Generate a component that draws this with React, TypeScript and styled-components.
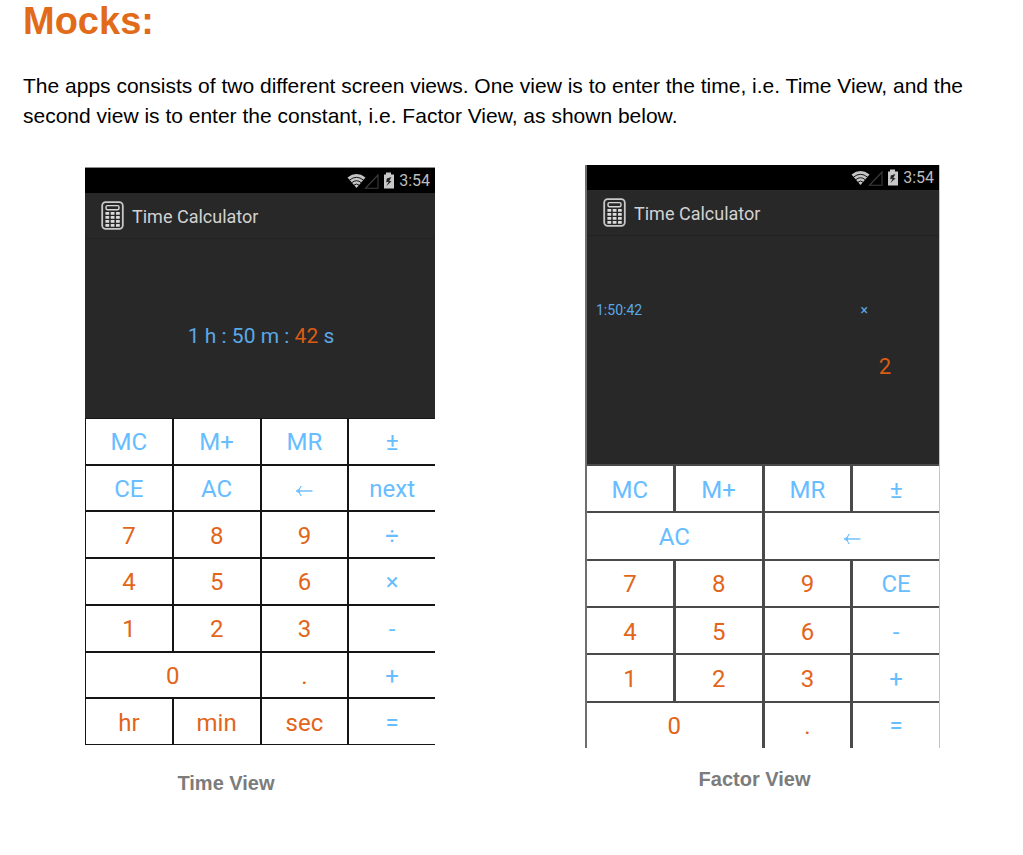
import React from "react";
import styled, { createGlobalStyle } from "styled-components";

const GlobalStyle = createGlobalStyle`
  * { box-sizing: border-box; }
  body {
    margin: 0;
    background: #fff;
    color: #000;
    font-family: "Liberation Sans", Arial, sans-serif;
  }
`;

const BLUE = "#67bdff";
const ORANGE = "#e2651a";

const Page = styled.main`
  padding: 0 23px 40px;
`;

const Title = styled.h1`
  margin: 0;
  font-size: 38px;
  line-height: 42px;
  color: #e26b1a;
`;

const Intro = styled.p`
  margin: 29px 0 34px;
  font-size: 21px;
  line-height: 30px;
`;

const Mocks = styled.div`
  display: grid;
  grid-template-columns: 350fr 355fr;
  gap: 150px;
  align-items: start;
  padding: 0 60px 0 62px;
`;

const Figure = styled.figure<{ $top: number }>`
  margin: ${(p) => p.$top}px 0 0;
`;

const Caption = styled.figcaption<{ $shift: number; $gap: number }>`
  padding: ${(p) => p.$gap}px ${(p) => p.$shift}px 0 0;
  font-size: 20px;
  font-weight: bold;
  line-height: 24px;
  text-align: center;
  color: #7c7c7c;
`;

const Phone = styled.section<{ $framed?: boolean }>`
  font-family: Roboto, sans-serif;
  background: #282828;
  border-style: solid;
  border-color: ${(p) => (p.$framed ? "transparent #c4c4c4 transparent #6e6e6e" : "#8e8e8e transparent transparent")};
  border-width: ${(p) => (p.$framed ? "0 1px 0 2px" : "1px 0 0")};
`;

const StatusBar = styled.div`
  display: flex;
  justify-content: flex-end;
  align-items: center;
  height: 25px;
  padding-right: 5px;
  background: #000;
  color: #bdbdbd;
  font-size: 16px;
  line-height: 20px;
`;

const StatusIcons = styled.svg`
  margin-right: 5px;
`;

const AppBar = styled.header`
  display: flex;
  align-items: center;
  gap: 8px;
  height: 46px;
  padding-left: 16px;
  border-bottom: 1px solid #222;
`;

const AppName = styled.h2`
  margin: 0;
  padding-top: 2px;
  font-size: 18px;
  font-weight: 400;
  line-height: 24px;
  color: #d2d2d2;
`;

const TimeDisplay = styled.output`
  display: flex;
  justify-content: center;
  align-items: center;
  height: 179px;
  padding: 14px 0 0 2px;
  font-size: 21px;
  color: #5aa9e6;
  white-space: pre;
`;

const Active = styled.span`
  color: #dc5c14;
`;

const FactorDisplay = styled.output`
  display: block;
  height: 228px;
  padding-top: 64px;
`;

const Expression = styled.div`
  display: flex;
  justify-content: space-between;
  padding: 0 71px 0 9px;
  font-size: 14px;
  line-height: 20px;
  color: #5aa9e6;
`;

const Operand = styled.div`
  padding: 33px 48px 0 0;
  font-size: 22px;
  line-height: 28px;
  text-align: right;
  color: #dc5c14;
`;

const Keypad = styled.div<{ $rows: number; $height: number; $line: string; $pad: string; $gap: string }>`
  display: grid;
  grid-template-columns: repeat(4, minmax(0, 1fr));
  grid-template-rows: repeat(${(p) => p.$rows}, 1fr);
  gap: ${(p) => p.$gap};
  height: ${(p) => p.$height}px;
  padding: ${(p) => p.$pad};
  background: ${(p) => p.$line};
`;

const Key = styled.button<{ $orange?: boolean; $wide?: boolean }>`
  grid-column: span ${(p) => (p.$wide ? 2 : 1)};
  display: flex;
  justify-content: center;
  align-items: center;
  min-width: 0;
  padding: 2px 0 0;
  border: 0;
  background: #fff;
  font: 400 24px / 28px Roboto, sans-serif;
  color: ${(p) => (p.$orange ? ORANGE : BLUE)};
  cursor: pointer;
`;

function CalculatorIcon() {
  return (
    <svg width="23" height="29" viewBox="0 0 23 29" fill="none" aria-hidden="true">
      <rect x="1.2" y="1.2" width="20.6" height="26.6" rx="3.5" stroke="#c8c8c8" strokeWidth="1.8" />
      <rect x="5" y="4.6" width="13" height="4.2" rx="1.5" stroke="#d6d6d6" strokeWidth="1.4" />
      <g fill="#dcdcdc">
        {[11, 15, 19, 23].map((y) =>
          [4.4, 9.7, 15].map((x) => <rect key={`${x}-${y}`} x={x} y={y} width="3.8" height="2.8" rx="0.6" />)
        )}
      </g>
    </svg>
  );
}

function Status() {
  return (
    <StatusBar>
      <StatusIcons width="47" height="18" viewBox="0 0 47 18" fill="none" aria-hidden="true">
        <path d="M0.5 5.4Q9.5 -1.4 18.5 5.4L9.5 16Z" fill="#c4c4c4" />
        <path d="M2.4 8.2Q9.5 2.4 16.6 8.2M4.6 10.8Q9.5 6.6 14.4 10.8M6.9 13.2Q9.5 10.8 12.1 13.2" stroke="#000" strokeWidth="0.9" />
        <path d="M18.5 16.3H31V3Z" stroke="#3c3c3c" strokeWidth="1.1" />
        <path d="M39 0.5H44V2.5H47V16.5H37V2.5H39Z" fill="#c8c8c8" />
        <path d="M44.4 5.1L39.8 6.4L39.2 10.3L41.7 9.8L39.4 14.1L44.6 9.2L42.3 9.1Z" fill="#222" />
      </StatusIcons>
      3:54
    </StatusBar>
  );
}

function Header() {
  return (
    <>
      <Status />
      <AppBar>
        <CalculatorIcon />
        <AppName>Time Calculator</AppName>
      </AppBar>
    </>
  );
}

type KeyDef = { label: string; wide?: boolean };

const parse = (keys: string): KeyDef[] =>
  keys.split(" ").map((k) => (k.endsWith("_") ? { label: k.slice(0, -1), wide: true } : { label: k }));

// A trailing underscore marks a key that spans two columns.
const timeKeys = parse("MC M+ MR ± CE AC ← next 7 8 9 ÷ 4 5 6 × 1 2 3 - 0_ . + hr min sec =");
const factorKeys = parse("MC M+ MR ± AC_ ←_ 7 8 9 CE 4 5 6 - 1 2 3 + 0_ . =");

const isOrange = (label: string) => /^(\d|\.|hr|min|sec)$/.test(label);

function BackArrow() {
  return (
    <svg width="18" height="16" viewBox="0 0 18 16" fill="none" stroke={BLUE} aria-hidden="true">
      <path d="M3 10H17.5" strokeWidth="1.4" />
      <path d="M6.2 5Q5 8.6 1 10Q5 11.4 6.2 15Q4.2 12 4.2 10Q4.2 8 6.2 5Z" fill={BLUE} strokeWidth="0.8" />
    </svg>
  );
}

function Keys({ keys }: { keys: KeyDef[] }) {
  return (
    <>
      {keys.map(({ label, wide }) => (
        <Key key={label} type="button" $wide={wide} $orange={isOrange(label)} aria-label={label === "←" ? "Backspace" : undefined}>
          {label === "←" ? <BackArrow /> : label}
        </Key>
      ))}
    </>
  );
}

export default function App() {
  return (
    <>
      <GlobalStyle />
      <Page>
        <Title>Mocks:</Title>
        <Intro>
          The apps consists of two different screen views. One view is to enter the time, i.e. Time View, and the
          second view is to enter the constant, i.e. Factor View, as shown below.
        </Intro>
        <Mocks>
          <Figure $top={2}>
            <Phone>
              <Header />
              <TimeDisplay>
                {"1 h : 50 m : "}
                <Active>42</Active>
                {" s"}
              </TimeDisplay>
              <Keypad $rows={7} $height={327} $line="#151515" $pad="1px 0 1px 1px" $gap="2px">
                <Keys keys={timeKeys} />
              </Keypad>
            </Phone>
            <Caption $shift={68} $gap={26}>Time View</Caption>
          </Figure>
          <Figure $top={0}>
            <Phone $framed>
              <Header />
              <FactorDisplay>
                <Expression>
                  <span>1:50:42</span>
                  <span>×</span>
                </Expression>
                <Operand>2</Operand>
              </FactorDisplay>
              <Keypad $rows={6} $height={284} $line="#4a4a4a" $pad="2px 0 0" $gap="2px 3px">
                <Keys keys={factorKeys} />
              </Keypad>
            </Phone>
            <Caption $shift={16} $gap={19}>Factor View</Caption>
          </Figure>
        </Mocks>
      </Page>
    </>
  );
}
